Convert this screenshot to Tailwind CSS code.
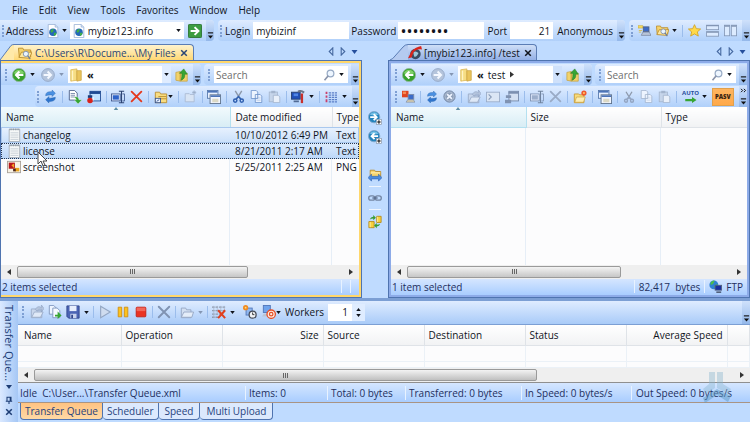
<!DOCTYPE html>
<html lang="en">
  <head>
    <meta charset="UTF-8" />
    <title>mybiz123.info - FTP Client</title>
    <script src="https://cdn.jsdelivr.net/npm/@tailwindcss/browser@4"></script>
  </head>
  <body class="h-screen flex flex-col overflow-hidden bg-[#bfdbff] text-[#10141c] font-['Open_Sans',sans-serif] text-[10px] leading-[14px] whitespace-nowrap">

    <!-- Icon sprite -->
    <svg class="hidden">
      <symbol id="caret" viewBox="0 0 6 4"><path d="M0 0h6L3 4z" fill="currentColor" /></symbol>
      <symbol id="more" viewBox="0 0 8 8"><path d="M1 1h6" stroke="#111" stroke-width="1.3" /><path d="M1 4h6L4 7.5z" fill="#111" /></symbol>
      <symbol id="chevrons" viewBox="0 0 8 6"><path d="M1 1l2 2-2 2M4.500 1l2 2-2 2" fill="none" stroke="#111" stroke-width="1.2" /></symbol>
      <symbol id="page" viewBox="0 0 16 16"><path d="M2.5.5h8l3 3v12h-11z" fill="#fff" stroke="#9fb6d8" /><path d="M10.5.5v3h3" fill="#dce8f8" stroke="#9fb6d8" /><circle cx="8" cy="9.5" r="4.3" fill="#2467b8" /><path d="M5 8q2-3 4-2l-1 3-2 1zM9 10h3q0 3-3 4z" fill="#3fae49" /></symbol>
      <symbol id="go" viewBox="0 0 16 16"><rect x=".5" y=".5" width="15" height="15" rx="1" fill="#3c9c40" stroke="#256f2b" /><path d="M3 8h8M7.5 3.5L12 8l-4.500 4.500" fill="none" stroke="#fff" stroke-width="2.2" /></symbol>
      <symbol id="back" viewBox="0 0 16 16"><circle cx="8" cy="8" r="7.5" fill="#35a02c" stroke="#8fb69a" /><path d="M2 6a6.500 6.500 0 0 1 12 0q-6 3-12 0" fill="#7fd06a" /><path d="M13 8H5M8.500 4L4.500 8l4 4" fill="none" stroke="#fff" stroke-width="2.3" /></symbol>
      <symbol id="fwd" viewBox="0 0 16 16"><circle cx="8" cy="8" r="7.3" fill="#b4c4dc" stroke="#93a7c6" /><path d="M3 8h8M7.500 4l4 4-4 4" fill="none" stroke="#f4f8ff" stroke-width="2.2" /></symbol>
      <symbol id="book" viewBox="0 0 16 16"><path d="M2 2l7-1v13l-7 1z" fill="#f6dd84" stroke="#d6b04a" stroke-width=".8" /><path d="M9 3h5v11l-5 1z" fill="#e9c45c" stroke="#c9a03c" stroke-width=".8" /><path d="M4 3v11" stroke="#fff4c4" stroke-width="1.5" /></symbol>
      <symbol id="up" viewBox="0 0 16 16"><path d="M1 5l5-1v11l-5-1zM6 6h8v9H6z" fill="#f2d26c" stroke="#c69f3a" stroke-width=".8" /><path d="M7 14q5-2 4-7h3L10 1 5 6h3q0 4-1 8z" fill="#37a534" stroke="#207a22" stroke-width=".6" /></symbol>
      <symbol id="lens" viewBox="0 0 16 16"><circle cx="10" cy="6" r="4.5" fill="#eef6ff" stroke="#96a9c4" stroke-width="1.6" /><path d="M7 9l-5 6" stroke="#8a94ab" stroke-width="2.2" /></symbol>
      <symbol id="refresh" viewBox="0 0 16 16"><path d="M2 7Q2 2 8 2h2V0l4 4-4 4V6H8Q5 6 2 7z" fill="#4a90e2" stroke="#2360aa" stroke-width=".5" /><path d="M14 9q0 5-6 5H6v2l-4-4 4-4v2h2q3 0 6-1z" fill="#2f75ce" stroke="#2360aa" stroke-width=".5" /></symbol>
      <symbol id="copyto" viewBox="0 0 16 16"><path d="M1.500.5h6l3 3v8h-9z" fill="#fff" stroke="#465a86" /><path d="M3 4h5M3 6h5M3 8h5" stroke="#7485a8" /><path d="M7 8q5-1 5.500 3H16l-4.500 5L7 11h2.500q0-1-2.500-3z" fill="#37a534" stroke="#fff" stroke-width=".4" /></symbol>
      <symbol id="panel" viewBox="0 0 16 16"><rect x="3.5" y="1.5" width="12" height="11" fill="#bfe0ff" stroke="#1f4a92" /><path d="M3 3h12" stroke="#1f4a92" stroke-width="3" /><path d="M1 6h5v3H1z" fill="#1c3c78" /><circle cx="3.5" cy="12" r="3.2" fill="#d9231c" /><path d="M7 8v4" stroke="#fff" /></symbol>
      <symbol id="rename" viewBox="0 0 16 16"><rect x=".5" y="4.5" width="10" height="8" fill="#e4edff" stroke="#3a548c" /><path d="M2 6h7v5H2z" fill="#2d62c8" /><path d="M9 1.500h6M9 14.500h6M12 1v14" stroke="#2d4474" stroke-width="1.2" /><path d="M13 4.500h2.500v8H13" fill="none" stroke="#3a548c" /></symbol>
      <symbol id="del" viewBox="0 0 16 16"><path d="M2 2l12 12M14 2L2 14" stroke="currentColor" stroke-width="2.2" stroke-linecap="round" /></symbol>
      <symbol id="foldertree" viewBox="0 0 16 16"><path d="M1.500 2.500h5l1 2h7v10h-13z" fill="#f8dd82" stroke="#b98b2c" /><path d="M5 7.500h9M5 10h9" stroke="#b98b2c" /><rect x="1.5" y="9.5" width="6" height="5" fill="#e8f1ff" stroke="#37548c" /><path d="M3 13l3-2" stroke="#37548c" /></symbol>
      <symbol id="foldergray" viewBox="0 0 16 16"><path d="M1.500 3.500h5l1 2h5v9h-11z" fill="#d3e0f2" stroke="#93a5c2" /><path d="M1.500 14l3-6h11l-2 6z" fill="#e4edf9" stroke="#93a5c2" /></symbol>
      <symbol id="newgray" viewBox="0 0 16 16"><path d="M1.500 4.500h5l1 1h5v9h-11z" fill="#d8e4f4" stroke="#a8b8d0" /><path d="M10 3h5M12.500.5v5M11 1.500l3 3M14 1.500l-3 3" stroke="#9aacc8" /></symbol>
      <symbol id="newfolder" viewBox="0 0 16 16"><path d="M1.500 4.500h5l1 1h5v9h-11z" fill="#f8dc7c" stroke="#c79a35" /><path d="M2 14l2-6h10l-2 6z" fill="#fdeeb2" stroke="#c79a35" stroke-width=".7" /><circle cx="12.5" cy="3.5" r="3" fill="#ef5a2b" /><circle cx="12.5" cy="3.5" r="1.2" fill="#ffc36a" /></symbol>
      <symbol id="windows" viewBox="0 0 16 16"><rect x=".5" y=".5" width="12" height="9" fill="#e8f1ff" stroke="#5678ac" /><path d="M1 2h11" stroke="#4c74b8" stroke-width="2" /><rect x="3.5" y="5.5" width="12" height="10" fill="#f2f6ff" stroke="#5d7088" /><path d="M4 7h11" stroke="#4c74b8" stroke-width="2" /><rect x="6" y="10" width="7" height="4" fill="#dcd9c4" /></symbol>
      <symbol id="cut" viewBox="0 0 16 16"><path d="M4 1l6 10M12 1L6 11" stroke="#8c98aa" stroke-width="1.7" /><circle cx="4" cy="13" r="2" fill="none" stroke="currentColor" stroke-width="1.8" /><circle cx="12" cy="13" r="2" fill="none" stroke="currentColor" stroke-width="1.8" /><path d="M5 11l3-3 3 3" fill="none" stroke="currentColor" stroke-width="1.8" /></symbol>
      <symbol id="copy" viewBox="0 0 16 16"><path d="M1.500.5h6l2 2v8h-8zM6.500 5.500h6l2 2v8h-8z" fill="#edf4ff" stroke="currentColor" /><path d="M8 9h5M8 11h5M8 13h5" stroke="currentColor" stroke-opacity=".35" /></symbol>
      <symbol id="paste" viewBox="0 0 16 16"><rect x="1.5" y="2.5" width="10" height="12" fill="#c6d5ea" stroke="#a3b4cd" /><path d="M4 1h5v3H4z" fill="#a3b4cd" /><path d="M6.500 6.500h6l2 2v7h-8z" fill="#e9f0fa" stroke="#a3b4cd" /></symbol>
      <symbol id="tools" viewBox="0 0 16 16"><rect x=".5" y="2.5" width="10" height="8" fill="#1f4fb8" stroke="#27406e" /><path d="M3 4h5v3H3z" fill="#4f85e4" /><path d="M3 13h6" stroke="#506a94" stroke-width="2" /><path d="M8 2q3-2 7 1" stroke="#6c7688" stroke-width="2.4" fill="none" /><path d="M12.500 4v11" stroke="#c8302c" stroke-width="2.6" /></symbol>
      <symbol id="list" viewBox="0 0 16 16"><path d="M2 1v3M2 6v3M2 11v4" stroke="#c8406c" stroke-width="2.4" /><path d="M5 2.500h3M5 5.500h3M5 8.500h3M5 11.500h3M5 14.500h3M9 2.500h3M9 5.500h3M9 8.500h3M9 11.500h3M9 14.500h3M13 2.500h3M13 5.500h3M13 8.500h3M13 11.500h3M13 14.500h3" stroke="#5b7fc8" stroke-width="1.6" /></symbol>
      <symbol id="connect" viewBox="0 0 16 16"><path d="M0 2h6v3H0z" fill="#f6dc63" stroke="#b99c2c" stroke-width=".6" /><rect x="6.5" y="3.5" width="7" height="6" fill="#3c6cc8" stroke="#53617c" /><path d="M4 14l2-4h8l2 4z" fill="#b9c5d8" stroke="#6f7f9b" stroke-width=".8" /><path d="M1 8h4M1 10h3" stroke="#d9b93d" /></symbol>
      <symbol id="folderlens" viewBox="0 0 16 16"><path d="M.5 2.500h5l1 2h8v8h-13z" fill="#f6d36c" stroke="#b98b2c" /><path d="M1 13l3-6h12l-3 7z" fill="#fde79c" stroke="#b98b2c" /><circle cx="9" cy="9" r="3" fill="#e8f4ff" stroke="#7c8ba6" /><path d="M11 11l3 4" stroke="#6c7b96" stroke-width="1.5" /></symbol>
      <symbol id="star" viewBox="0 0 16 16"><path d="M8 .8l2.200 4.900 5.300.5-4 3.500 1.200 5.200L8 12.200l-4.700 2.700 1.200-5.200-4-3.500 5.300-.5z" fill="#ffd94a" stroke="#d0a01f" /></symbol>
      <symbol id="splith" viewBox="0 0 16 16"><rect x=".5" y="1.5" width="15" height="5.5" fill="#dcebff" stroke="#8295b4" /><rect x=".5" y="9.5" width="15" height="5.5" fill="#dcebff" stroke="#8295b4" /><path d="M1 2h14M1 10h14" stroke="#8295b4" stroke-width="1.5" /></symbol>
      <symbol id="splitv" viewBox="0 0 16 16"><rect x=".5" y="1.5" width="6.5" height="13" fill="#dcebff" stroke="#8295b4" /><rect x="9" y="1.5" width="6.5" height="13" fill="#dcebff" stroke="#8295b4" /><path d="M1 2.500h6M9 2.500h6" stroke="#8295b4" stroke-width="2" /></symbol>
      <symbol id="remote" viewBox="0 0 16 16"><circle cx="8.500" cy="9" r="6" fill="#3a4d63" /><path d="M6 7q3-2 6 1-2 5-5 4z" fill="#9ec7d8" /><path d="M0 14L4 6q5-5 11-6l1 4q-7-1-10 4l-2 5z" fill="#d8261c" /></symbol>
      <symbol id="disconnect" viewBox="0 0 16 16"><path d="M0 1h8v8H0z" fill="#e0431f" /><path d="M1 2h4v3H1z" fill="#f58a54" /><rect x="7.5" y="5.5" width="7" height="6" fill="#3c6cc8" stroke="#7c8ba6" /><path d="M5 15l2-3h7l2 3z" fill="#d8cfae" stroke="#7c8ba6" stroke-width=".8" /></symbol>
      <symbol id="stopgray" viewBox="0 0 16 16"><circle cx="8" cy="8" r="7" fill="#8e9fb9" stroke="#7589a8" /><circle cx="8" cy="8" r="5.5" fill="none" stroke="#b5c3d8" /><path d="M5 5l6 6M11 5l-6 6" stroke="#eef4ff" stroke-width="2" /></symbol>
      <symbol id="opengray" viewBox="0 0 16 16"><path d="M1.500 4.500h5l1 2h6v8h-12z" fill="#c9d7ec" stroke="#9aacc8" /><path d="M2 14l3-6h10l-3 6z" fill="#dfe9f7" stroke="#9aacc8" /><path d="M6 5q3-5 7-2V0l3 4-3 4V5q-3-1-5 2z" fill="#b4c4dd" stroke="#8fa2c0" stroke-width=".7" /></symbol>
      <symbol id="cmdgray" viewBox="0 0 16 16"><rect x=".5" y="2.5" width="15" height="11" fill="#dbe6f5" stroke="#9aacc8" /><path d="M3 5l3 3-3 3" fill="none" stroke="#8a9cb9" stroke-width="1.3" /></symbol>
      <symbol id="panelgray" viewBox="0 0 16 16"><rect x="4.5" y="1.5" width="11" height="11" fill="#d4e0f2" stroke="#7488aa" /><path d="M4 3h12" stroke="#7c90b0" stroke-width="2.5" /><path d="M1 6h6v3H1zM0 11h7v4H0z" fill="#8093b2" /></symbol>
      <symbol id="renamegray" viewBox="0 0 16 16"><rect x=".5" y="4.5" width="10" height="8" fill="#e4edff" stroke="#7f92b3" /><path d="M2 6h7v5H2z" fill="#9caecb" /><path d="M9 1.500h6M9 14.500h6M12 1v14" stroke="#71849f" stroke-width="1.2" /><path d="M13 4.500h2.500v8H13" fill="none" stroke="#7f92b3" /></symbol>
      <symbol id="auto" viewBox="0 0 16 8"><path d="M1 2.500h9V0l6 4-6 4V5.500H1z" fill="#37a534" /></symbol>
      <symbol id="addq" viewBox="0 0 16 16"><path d="M1.500.5h5l3 3v7h-8z" fill="#eef5ff" stroke="#7b93bd" /><path d="M5.500 3.500h5l3 3v8h-8z" fill="#f6faff" stroke="#7b93bd" /><path d="M8 11h3V7.500L15.500 12 11 16v-3H8z" fill="#37a534" /></symbol>
      <symbol id="save" viewBox="0 0 16 16"><path d="M1 1h14v14H3l-2-2z" fill="#4b64b4" stroke="#31468c" /><path d="M4 1h8v6H4z" fill="#e8effd" /><path d="M5 10h7v5H5z" fill="#c7d2ec" /><path d="M6 11h2v4H6z" fill="#31468c" /></symbol>
      <symbol id="play" viewBox="0 0 16 16"><path d="M3 1.500L14 8 3 14.500z" fill="#cfdcef" stroke="#94a7c4" stroke-width="1.3" /></symbol>
      <symbol id="pause" viewBox="0 0 16 16"><path d="M2.500 2.500h4v11h-4zM9.500 2.500h4v11h-4z" fill="#fcc21d" stroke="#d08e10" /></symbol>
      <symbol id="stop" viewBox="0 0 16 16"><rect x="2.5" y="2.5" width="11" height="11" rx="1" fill="#ea3323" stroke="#bf1e14" /><path d="M3 3h10v4H3z" fill="#f2675a" /></symbol>
      <symbol id="clearq" viewBox="0 0 16 16"><path d="M0 2.500h16M0 6.500h16M0 10.500h10M0 14h8" stroke="#8e9aae" stroke-width="1.5" stroke-dasharray="3 1" /><path d="M2 1v14M6 1v9M10 1v6M14 1v6" stroke="#a9b3c4" stroke-width=".8" /><path d="M7 6l8 9M15 6l-8 9" stroke="#e0401f" stroke-width="2.3" /></symbol>
      <symbol id="sched" viewBox="0 0 16 16"><rect x="3.5" y="3.5" width="7" height="8" fill="#8fb7f0" stroke="#4f74b8" /><circle cx="3" cy="3" r="3" fill="#f08a24" /><circle cx="3" cy="3" r="1" fill="#ffe27a" /><circle cx="11" cy="11" r="4" fill="#f1f3f6" stroke="#454b57" stroke-width="1.4" /><path d="M11 8.500V11h2" fill="none" stroke="#222" /></symbol>
      <symbol id="workstop" viewBox="0 0 16 16"><rect x="1.5" y=".5" width="8" height="8" fill="#6fa3ec" stroke="#4f74b8" /><path d="M0 13l2-3h7v3z" fill="#b9c5d8" /><circle cx="10.5" cy="10.5" r="4.8" fill="#ffe9df" stroke="#e5512a" stroke-width="1.5" /><circle cx="10.5" cy="10.5" r="2" fill="none" stroke="#e5512a" stroke-width="1.4" /></symbol>
      <symbol id="sendr" viewBox="0 0 16 16"><circle cx="7" cy="7" r="6.5" fill="#2383bd" stroke="#84a9cc" /><path d="M2 4q5-5 10 0-5 2-10 0" fill="#76c1e6" /><path d="M2.500 7h7M6.500 3.500L10 7l-3.500 3.500" fill="none" stroke="#fff" stroke-width="2" /><rect x="9.5" y="9.5" width="6" height="6" fill="#fff" stroke="#8795a8" stroke-width=".8" /><path d="M12.500 10.500v4M10.500 12.500h4" stroke="#111" stroke-width="1.2" /></symbol>
      <symbol id="sendl" viewBox="0 0 16 16"><circle cx="7" cy="7" r="6.5" fill="#2383bd" stroke="#84a9cc" /><path d="M2 4q5-5 10 0-5 2-10 0" fill="#76c1e6" /><path d="M11.500 7h-7M7.500 3.500L4 7l3.500 3.500" fill="none" stroke="#fff" stroke-width="2" /><rect x="9.5" y="9.5" width="6" height="6" fill="#fff" stroke="#8795a8" stroke-width=".8" /><path d="M12.500 10.500v4M10.500 12.500h4" stroke="#111" stroke-width="1.2" /></symbol>
      <symbol id="compare" viewBox="0 0 16 16"><path d="M2.500 2.500h5l1 1.500h6v7h-12z" fill="#f6d36c" stroke="#b98b2c" /><path d="M3 5.500h11" stroke="#fff0ba" /><path d="M0 11l4-4v2.500h8V7l4 4-4 4v-2.500H4V15z" fill="#4a8be0" stroke="#2a5ba8" stroke-width=".6" /></symbol>
      <symbol id="link" viewBox="0 0 16 16"><rect x=".8" y="5.5" width="7" height="5" rx="2.5" fill="none" stroke="#7487a5" stroke-width="1.5" /><rect x="8.2" y="5.5" width="7" height="5" rx="2.5" fill="none" stroke="#7487a5" stroke-width="1.5" /><path d="M5 8h6" stroke="#56698a" stroke-width="1.5" /></symbol>
      <symbol id="sync" viewBox="0 0 16 16"><path d="M10 1.500h5v7h-5zM1 7.500h6v7H1z" fill="#f8cf3c" stroke="#b68a18" /><path d="M11 2v6M2.500 8v6" stroke="#fff0a0" /><path d="M2 5q1-3 4-3V0l3 3-3 3V4Q4 4 2 5zM14 10q-1 3-4 3v2l-3-3 3-3v2q2 0 4-1z" fill="#3a9c32" /></symbol>
      <symbol id="text" viewBox="0 0 16 16"><path d="M2.500 1.500h12v14h-12z" fill="#f6f8f8" stroke="#a5adb5" /><path d="M3 1.500h11" stroke="#8b959e" stroke-width="2" stroke-dasharray="1 1" /><path d="M4 5.500h9M4 8h9M4 10.500h9M4 13h9" stroke="#c3ccd3" /></symbol>
      <symbol id="image" viewBox="0 0 16 16"><rect x=".5" y="1.5" width="15" height="13" fill="#f8f1e4" stroke="#a79f96" /><path d="M2 3h7v7H2z" fill="#b8161a" /><path d="M5 6l3-2v5z" fill="#f5a623" /><path d="M9 9h5v4H9z" fill="#e8a21c" /><path d="M7 10h3v3H7z" fill="#4a2418" /></symbol>
      <symbol id="globe" viewBox="0 0 16 16"><circle cx="6" cy="6" r="5.5" fill="#2f7fd4" /><path d="M2 3q3-3 5-2L5 5 2 6zM6 8l4-3q2 3-1 5z" fill="#4bbd4b" /><rect x="7.5" y="6.5" width="8" height="6" fill="#1b2fa0" stroke="#53617c" /><path d="M9 15h6" stroke="#53617c" stroke-width="2" /></symbol>
      <symbol id="pin" viewBox="0 0 10 10"><path d="M2.500 6.500v-5h5v5M1 6.500h8M5 7v3M6.500 1.500v5" stroke="currentColor" fill="none" stroke-width="1.3" /></symbol>
      <symbol id="close" viewBox="0 0 10 10"><path d="M1.500 1.500l7 7M8.500 1.500l-7 7" stroke="currentColor" stroke-width="1.9" /></symbol>
      <symbol id="prev" viewBox="0 0 8 10"><path d="M6 1v8L2 5z" fill="none" stroke="#44679f" stroke-width="1.2" /></symbol>
      <symbol id="next" viewBox="0 0 8 10"><path d="M2 1v8l4-4z" fill="none" stroke="#44679f" stroke-width="1.2" /></symbol>
      <symbol id="left" viewBox="0 0 4 6"><path d="M4 0v6L0 3z" fill="#333" /></symbol>
      <symbol id="right" viewBox="0 0 4 6"><path d="M0 0v6l4-3z" fill="#333" /></symbol>
    </svg>

    <!-- Menu bar -->
    <nav class="flex items-center h-5 pl-3 gap-[11px]">
      <a href="#">File</a>
      <a href="#">Edit</a>
      <a href="#">View</a>
      <a href="#">Tools</a>
      <a href="#">Favorites</a>
      <a href="#">Window</a>
      <a href="#">Help</a>
    </nav>

    <!-- Connection bar -->
    <div class="flex gap-1 h-[21px]">
      <div class="flex items-center w-[214px] rounded-r bg-linear-to-b from-[#dfecff] to-[#b0d0fa]">
        <span class="ml-[2px] mr-[2px] h-3 border-l-2 border-dotted border-[#7e9fd3]"></span>
        <label for="address">Address</label>
        <button aria-label="Site type" class="flex items-center gap-[2px] ml-[2px] mr-[3px]"><svg class="size-[14px]"><use href="#page" /></svg><svg class="w-[5px] h-[3px]"><use href="#caret" /></svg></button>
        <div class="flex items-center flex-1 min-w-0 h-[17px] bg-white pl-[2px] mr-1">
          <svg class="size-[14px] shrink-0"><use href="#page" /></svg>
          <input id="address" type="text" value="mybiz123.info" class="flex-1 min-w-0 pl-[2px] outline-none" />
          <button aria-label="Address history" class="px-[3px]"><svg class="w-[5px] h-[3px]"><use href="#caret" /></svg></button>
        </div>
        <button aria-label="Connect"><svg class="size-[14px]"><use href="#go" /></svg></button>
        <button aria-label="More" class="flex items-end justify-center w-2 h-full ml-1 pb-[2px] rounded-r bg-linear-to-b from-[#cfe1fb] to-[#94b8ea]"><svg class="size-[7px]"><use href="#more" /></svg></button>
      </div>
      <div class="flex items-center flex-1 max-w-[407px] rounded bg-linear-to-b from-[#dfecff] to-[#b0d0fa]">
        <span class="ml-[2px] mr-[3px] h-3 border-l-2 border-dotted border-[#7e9fd3]"></span>
        <label for="login">Login</label>
        <input id="login" type="text" value="mybizinf" class="w-24 h-[17px] bg-white ml-[3px] mr-[2px] px-[3px] outline-none" />
        <label for="password">Password</label>
        <input id="password" type="password" value="password" class="w-[86px] h-[17px] bg-white ml-[2px] mr-[3px] px-[2px] text-[16px] outline-none" />
        <label for="port">Port</label>
        <input id="port" type="text" value="21" class="flex-1 min-w-0 h-[17px] bg-white ml-[3px] mr-1 px-[3px] text-right outline-none" />
        <button>Anonymous</button>
        <button aria-label="More" class="flex items-end justify-center w-2 h-full ml-1 pb-[2px] rounded-r bg-linear-to-b from-[#cfe1fb] to-[#94b8ea]"><svg class="size-[7px]"><use href="#more" /></svg></button>
      </div>
      <div class="flex items-center gap-[5px] w-[122px] rounded-l bg-linear-to-b from-[#dfecff] to-[#b0d0fa]">
        <span class="ml-[2px] h-3 border-l-2 border-dotted border-[#7e9fd3]"></span>
        <button aria-label="Quick connect"><svg class="size-[13px]"><use href="#connect" /></svg></button>
        <button aria-label="Site manager" class="flex items-center gap-[3px]"><svg class="size-[13px]"><use href="#folderlens" /></svg><svg class="w-[5px] h-[3px]"><use href="#caret" /></svg></button>
        <span class="w-px h-3 bg-[#9bbdec]"></span>
        <button aria-label="Favorites"><svg class="size-[13px]"><use href="#star" /></svg></button>
        <button aria-label="Split horizontally"><svg class="size-[13px]"><use href="#splith" /></svg></button>
        <button aria-label="Split vertically"><svg class="size-[13px]"><use href="#splitv" /></svg></button>
        <button aria-label="More" class="flex items-end justify-center w-2 h-full ml-auto pb-[2px] bg-linear-to-b from-[#cfe1fb] to-[#94b8ea]"><svg class="size-[7px]"><use href="#more" /></svg></button>
      </div>
    </div>

    <!-- Panes -->
    <main class="grid grid-cols-[1fr_26px_1fr] flex-1 min-h-0 pt-[3px]">

      <!-- Local pane -->
      <section class="flex flex-col min-w-0 min-h-0">
        <div class="flex items-end h-4">
          <svg class="w-[14px] h-4 shrink-0" viewBox="0 0 14 16"><path d="M0 16L11 1.500Q12 .5 14 .5V16z" fill="#ffe9a8" /><path d="M0 16L11 1.500Q12 .5 14 .5" fill="none" stroke="#5b7db5" /></svg>
          <div class="flex items-center gap-[3px] h-4 pl-1 pr-[5px] border-t border-r border-[#5b7db5] rounded-tr-sm bg-linear-to-b from-[#fff3cd] to-[#ffd873] text-[#2b4675]">
            <svg class="size-[14px]"><use href="#folderlens" /></svg>
            <span>C:\Users\R\Docume...\My Files</span>
            <button aria-label="Close tab" class="ml-[2px]"><svg class="size-2"><use href="#close" /></svg></button>
          </div>
          <div class="flex items-center gap-1 ml-auto mr-1 mb-1 text-[#264f9c]">
            <button aria-label="Previous tab"><svg class="w-2 h-[9px]"><use href="#prev" /></svg></button>
            <button aria-label="Next tab"><svg class="w-2 h-[9px]"><use href="#next" /></svg></button>
            <button aria-label="Tab list"><svg class="w-[7px] h-1"><use href="#caret" /></svg></button>
          </div>
        </div>
        <div class="flex flex-col flex-1 min-h-0 border border-[#4f74b0]">
          <div class="flex flex-col flex-1 min-h-0 border-t-2 border-r-2 border-b-2 border-[#ffd76b] bg-[#bfdbff]">
            <div class="flex gap-[3px] h-[21px] mt-px">
              <div class="flex items-center w-[200px] rounded-r bg-linear-to-b from-[#dfecff] to-[#b0d0fa]">
                <span class="ml-1 mr-[5px] h-3 border-l-2 border-dotted border-[#7e9fd3]"></span>
                <button aria-label="Back" class="flex items-center gap-1 mr-[6px]"><svg class="size-[14px]"><use href="#back" /></svg><svg class="w-[5px] h-[3px]"><use href="#caret" /></svg></button>
                <button aria-label="Forward" class="flex items-center gap-1 mr-1 text-[#8496b3]"><svg class="size-[14px]"><use href="#fwd" /></svg><svg class="w-[5px] h-[3px]"><use href="#caret" /></svg></button>
                <div class="flex items-center flex-1 h-[17px] bg-white pl-px mr-1">
                  <svg class="size-[14px]"><use href="#book" /></svg>
                  <button class="ml-1 font-bold text-[11px]">«</button>
                  <button aria-label="Path history" class="flex items-center h-full px-[2px] ml-auto bg-[#dfecff]"><svg class="w-[5px] h-[3px]"><use href="#caret" /></svg></button>
                </div>
                <button aria-label="Up"><svg class="size-[14px]"><use href="#up" /></svg></button>
                <button aria-label="More" class="flex items-end justify-center w-2 h-full ml-1 pb-[2px] rounded-r bg-linear-to-b from-[#cfe1fb] to-[#94b8ea]"><svg class="size-[7px]"><use href="#more" /></svg></button>
              </div>
              <div class="flex items-center flex-1 min-w-0 rounded-l bg-linear-to-b from-[#dfecff] to-[#b0d0fa]">
                <span class="ml-1 mr-1 h-3 border-l-2 border-dotted border-[#7e9fd3]"></span>
                <div class="flex items-center flex-1 min-w-0 h-[17px] bg-white pr-1">
                  <input type="search" aria-label="Search local files" placeholder="Search" class="flex-1 min-w-0 pl-[2px] outline-none placeholder:text-[#6d6d6d]" />
                  <button aria-label="Search options" class="flex items-center gap-1"><svg class="size-3"><use href="#lens" /></svg><svg class="w-[5px] h-[3px]"><use href="#caret" /></svg></button>
                </div>
                <button aria-label="More" class="flex items-end justify-center w-2 h-full ml-[3px] pb-[2px] bg-linear-to-b from-[#cfe1fb] to-[#94b8ea]"><svg class="size-[7px]"><use href="#more" /></svg></button>
              </div>
            </div>
            <div class="flex items-center gap-[5px] h-[21px] mt-px ml-[34px] rounded-l bg-linear-to-b from-[#dfecff] to-[#b0d0fa]">
              <span class="ml-[2px] h-3 border-l-2 border-dotted border-[#7e9fd3]"></span>
              <button aria-label="Refresh"><svg class="size-[13px]"><use href="#refresh" /></svg></button>
              <span class="w-px h-3 bg-[#9bbdec]"></span>
              <button aria-label="Copy to"><svg class="size-[14px]"><use href="#copyto" /></svg></button>
              <button aria-label="Panel"><svg class="size-[14px]"><use href="#panel" /></svg></button>
              <span class="w-px h-3 bg-[#9bbdec]"></span>
              <button aria-label="Rename"><svg class="size-[14px]"><use href="#rename" /></svg></button>
              <button aria-label="Delete" class="text-[#e5371c]"><svg class="size-[13px]"><use href="#del" /></svg></button>
              <span class="w-px h-3 bg-[#9bbdec]"></span>
              <button aria-label="Folder tree" class="flex items-center"><svg class="size-[14px]"><use href="#foldertree" /></svg><svg class="w-[5px] h-[3px]"><use href="#caret" /></svg></button>
              <span class="w-px h-3 bg-[#9bbdec]"></span>
              <button aria-label="New folder" disabled><svg class="size-[13px]"><use href="#newgray" /></svg></button>
              <span class="w-px h-3 bg-[#9bbdec]"></span>
              <button aria-label="Windows"><svg class="size-[14px]"><use href="#windows" /></svg></button>
              <span class="w-px h-3 bg-[#9bbdec]"></span>
              <button aria-label="Cut" class="text-[#2f5fb0]"><svg class="size-[13px]"><use href="#cut" /></svg></button>
              <button aria-label="Copy" class="text-[#6a8fc8]"><svg class="size-[13px]"><use href="#copy" /></svg></button>
              <button aria-label="Paste" disabled><svg class="size-[13px]"><use href="#paste" /></svg></button>
              <span class="w-px h-3 bg-[#9bbdec]"></span>
              <button aria-label="Tools" class="flex items-center gap-1"><svg class="size-[14px]"><use href="#tools" /></svg><svg class="w-[5px] h-[3px]"><use href="#caret" /></svg></button>
              <span class="w-px h-3 bg-[#9bbdec]"></span>
              <button aria-label="View" class="flex items-center gap-[5px]"><svg class="size-3"><use href="#list" /></svg><svg class="w-[5px] h-[3px]"><use href="#caret" /></svg></button>
              <button aria-label="More" class="flex items-end justify-center w-2 h-full ml-auto pb-[2px] bg-linear-to-b from-[#cfe1fb] to-[#94b8ea]"><svg class="size-[7px]"><use href="#more" /></svg></button>
            </div>
            <div class="relative flex flex-1 min-h-0 bg-[#fcfcfd]">
              <div class="flex-none w-[229px] border-r border-[#e6eef7]"></div>
              <div class="flex-none w-[102px] border-r border-[#e6eef7]"></div>
              <table class="absolute inset-x-0 top-0 w-full table-fixed">
                <thead>
                  <tr class="h-5">
                    <th class="w-[229px] pl-[5px] text-left font-normal border-r border-b border-[#b4e0f0] bg-linear-to-b from-[#f2fafd] to-[#d8edf5]">Name<svg class="absolute top-0 left-28 w-[6px] h-[3px] rotate-180 text-[#5f8fa8]"><use href="#caret" /></svg></th>
                    <th class="w-[102px] pl-[5px] text-left font-normal border-r border-b border-[#dfe3e8] bg-linear-to-b from-white to-[#f1f2f4]">Date modified</th>
                    <th class="pl-1 text-left font-normal border-b border-[#dfe3e8] bg-linear-to-b from-white to-[#f1f2f4]">Type</th>
                  </tr>
                </thead>
                <tbody>
                  <tr class="h-4 bg-linear-to-b from-[#e9f2fe] to-[#c8dffa] outline outline-[#a9c8ee] -outline-offset-1">
                    <td class="pl-[6px]"><div class="flex items-center gap-[2px]"><svg class="size-[14px]"><use href="#text" /></svg>changelog</div></td>
                    <td class="pl-[5px]">10/10/2012 6:49 PM</td>
                    <td class="pl-1 overflow-hidden">Text</td>
                  </tr>
                  <tr class="h-4 bg-linear-to-b from-[#dcebfd] to-[#bad6f8] outline-1 outline-dotted outline-[#27374f] -outline-offset-1">
                    <td class="pl-[6px]"><div class="flex items-center gap-[2px]"><svg class="size-[14px]"><use href="#text" /></svg>license</div></td>
                    <td class="pl-[5px]">8/21/2011 2:17 AM</td>
                    <td class="pl-1 overflow-hidden">Text</td>
                  </tr>
                  <tr class="h-4">
                    <td class="pl-[6px]"><div class="flex items-center gap-[2px]"><svg class="size-[14px]"><use href="#image" /></svg>screenshot</div></td>
                    <td class="pl-[5px]">5/25/2011 2:25 AM</td>
                    <td class="pl-1 overflow-hidden">PNG</td>
                  </tr>
                </tbody>
              </table>
              <svg class="absolute left-9 top-[44px] w-[11px] h-4" viewBox="0 0 11 16"><path d="M1 1v12l3-3 2 5 2-1-2-4h4z" fill="#fff" stroke="#444" /></svg>
            </div>
            <div class="flex items-center h-[14px] bg-[#efefef]">
              <button aria-label="Scroll left" class="w-4 flex justify-center"><svg class="w-1 h-[6px]"><use href="#left" /></svg></button>
              <div class="flex items-center justify-center w-[231px] h-3 border border-[#9a9a9a] rounded-xs bg-linear-to-b from-[#f3f3f3] to-[#c6c6c6]"><span class="w-[5px] h-[5px] border-x border-[#666] flex justify-center"><i class="w-px bg-[#666]"></i></span></div>
              <button aria-label="Scroll right" class="w-4 ml-auto flex justify-center"><svg class="w-1 h-[6px]"><use href="#right" /></svg></button>
            </div>
            <div class="flex items-center h-4 pl-px text-[#1e2f5e] bg-linear-to-b from-[#d5e6ff] via-[#bfdaff] to-[#a9cdff]">
              <span>2 items selected</span>
              <span class="w-px h-[13px] ml-auto bg-[#e8f2ff]"></span>
              <span class="w-px h-[13px] ml-2 mr-2 bg-[#e8f2ff]"></span>
            </div>
          </div>
        </div>
      </section>

      <!-- Transfer buttons -->
      <div class="flex flex-col items-center pt-[67px]">
        <button aria-label="Upload"><svg class="size-[14px]"><use href="#sendr" /></svg></button>
        <button aria-label="Download" class="mt-[5px]"><svg class="size-[14px]"><use href="#sendl" /></svg></button>
        <button aria-label="Compare folders" class="mt-6"><svg class="size-[14px]"><use href="#compare" /></svg></button>
        <span class="w-3 h-px mt-1 bg-[#eef5ff]"></span>
        <button aria-label="Link folders" class="mt-1"><svg class="size-[14px]"><use href="#link" /></svg></button>
        <span class="w-3 h-px mt-1 bg-[#eef5ff]"></span>
        <button aria-label="Synchronize" class="mt-[5px]"><svg class="size-[14px]"><use href="#sync" /></svg></button>
      </div>

      <!-- Remote pane -->
      <section class="flex flex-col min-w-0 min-h-0">
        <div class="flex items-end h-4">
          <svg class="w-5 h-4 shrink-0" viewBox="0 0 20 16"><path d="M2 16q3-1 5-4l8-9Q17 .5 20 .5V16z" fill="#b5cbf0" /><path d="M2 16q3-1 5-4l8-9Q17 .5 20 .5" fill="none" stroke="#5b7db5" /></svg>
          <div class="flex items-center gap-[2px] h-4 pr-1 border-t border-r border-[#5b7db5] rounded-tr-sm bg-linear-to-b from-[#cfdff7] to-[#93b0e6]">
            <svg class="size-[14px]"><use href="#remote" /></svg>
            <span>[mybiz123.info] /test</span>
            <button aria-label="Close tab" class="ml-[2px]"><svg class="size-2"><use href="#close" /></svg></button>
          </div>
          <div class="flex items-center gap-1 ml-auto mr-1 mb-1 text-[#264f9c]">
            <button aria-label="Previous tab"><svg class="w-2 h-[9px]"><use href="#prev" /></svg></button>
            <button aria-label="Next tab"><svg class="w-2 h-[9px]"><use href="#next" /></svg></button>
            <button aria-label="Tab list"><svg class="w-[7px] h-1"><use href="#caret" /></svg></button>
          </div>
        </div>
        <div class="flex flex-col flex-1 min-h-0 border border-[#4f74b0]">
          <div class="flex flex-col flex-1 min-h-0 border-2 border-[#8dabe8] bg-[#bfdbff]">
            <div class="flex gap-[3px] h-[21px] mt-px">
              <div class="flex items-center flex-1 min-w-0 rounded-r bg-linear-to-b from-[#dfecff] to-[#b0d0fa]">
                <span class="ml-1 mr-[5px] h-3 border-l-2 border-dotted border-[#7e9fd3]"></span>
                <button aria-label="Back" class="flex items-center gap-1 mr-[6px]"><svg class="size-[14px]"><use href="#back" /></svg><svg class="w-[5px] h-[3px]"><use href="#caret" /></svg></button>
                <button aria-label="Forward" class="flex items-center gap-1 mr-1 text-[#8496b3]"><svg class="size-[14px]"><use href="#fwd" /></svg><svg class="w-[5px] h-[3px]"><use href="#caret" /></svg></button>
                <div class="flex items-center flex-1 h-[17px] bg-white pl-px mr-1">
                  <svg class="size-[14px]"><use href="#book" /></svg>
                  <button class="ml-1 font-bold text-[11px]">«</button>
                  <button class="flex items-center gap-[5px] ml-1">test<svg class="w-1 h-[7px]"><use href="#right" /></svg></button>
                  <button aria-label="Path history" class="flex items-center h-full px-[2px] ml-auto bg-[#cfe1fb]"><svg class="w-[5px] h-[3px]"><use href="#caret" /></svg></button>
                </div>
                <button aria-label="Up"><svg class="size-[14px]"><use href="#up" /></svg></button>
                <button aria-label="More" class="flex items-end justify-center w-2 h-full ml-1 pb-[2px] rounded-r bg-linear-to-b from-[#cfe1fb] to-[#94b8ea]"><svg class="size-[7px]"><use href="#more" /></svg></button>
              </div>
              <div class="flex items-center w-[152px] rounded-l bg-linear-to-b from-[#dfecff] to-[#b0d0fa]">
                <span class="ml-1 mr-1 h-3 border-l-2 border-dotted border-[#7e9fd3]"></span>
                <div class="flex items-center flex-1 min-w-0 h-[17px] bg-white pr-1">
                  <input type="search" aria-label="Search remote files" placeholder="Search" class="flex-1 min-w-0 pl-[2px] outline-none placeholder:text-[#6d6d6d]" />
                  <button aria-label="Search options" class="flex items-center gap-1"><svg class="size-3"><use href="#lens" /></svg><svg class="w-[5px] h-[3px]"><use href="#caret" /></svg></button>
                </div>
                <button aria-label="More" class="flex items-end justify-center w-2 h-full ml-[3px] pb-[2px] bg-linear-to-b from-[#cfe1fb] to-[#94b8ea]"><svg class="size-[7px]"><use href="#more" /></svg></button>
              </div>
            </div>
            <div class="flex items-center gap-[5px] h-[21px] mt-px bg-linear-to-b from-[#dfecff] to-[#b0d0fa]">
              <span class="ml-1 h-3 border-l-2 border-dotted border-[#7e9fd3]"></span>
              <button aria-label="Disconnect"><svg class="size-[13px]"><use href="#disconnect" /></svg></button>
              <span class="w-px h-3 bg-[#9bbdec]"></span>
              <button aria-label="Refresh"><svg class="size-3"><use href="#refresh" /></svg></button>
              <button aria-label="Stop" disabled><svg class="size-[13px]"><use href="#stopgray" /></svg></button>
              <span class="w-px h-3 bg-[#9bbdec]"></span>
              <button aria-label="Open" disabled><svg class="size-[14px]"><use href="#opengray" /></svg></button>
              <button aria-label="Command" disabled><svg class="size-[14px]"><use href="#cmdgray" /></svg></button>
              <button aria-label="Panel" disabled><svg class="size-[14px]"><use href="#panelgray" /></svg></button>
              <span class="w-px h-3 bg-[#9bbdec]"></span>
              <button aria-label="Rename" disabled><svg class="size-[14px]"><use href="#renamegray" /></svg></button>
              <button aria-label="Delete" disabled class="text-[#9aabc6]"><svg class="size-[13px]"><use href="#del" /></svg></button>
              <span class="w-px h-3 bg-[#9bbdec]"></span>
              <button aria-label="New folder"><svg class="size-[14px]"><use href="#newfolder" /></svg></button>
              <span class="w-px h-3 bg-[#9bbdec]"></span>
              <button aria-label="Windows"><svg class="size-[14px]"><use href="#windows" /></svg></button>
              <span class="w-px h-3 bg-[#9bbdec]"></span>
              <button aria-label="Cut" disabled class="text-[#93a5c2]"><svg class="size-3"><use href="#cut" /></svg></button>
              <button aria-label="Copy" disabled class="text-[#a3b4cd]"><svg class="size-[13px]"><use href="#copy" /></svg></button>
              <button aria-label="Paste" disabled><svg class="size-[13px]"><use href="#paste" /></svg></button>
              <span class="w-px h-3 bg-[#9bbdec]"></span>
              <button class="flex items-center gap-[3px]"><span class="flex flex-col items-center text-[6px] leading-[7px] font-bold text-[#274f9c]">AUTO<svg class="w-[13px] h-[6px]"><use href="#auto" /></svg></span><svg class="w-[5px] h-[3px]"><use href="#caret" /></svg></button>
              <button class="h-[18px] px-[2px] border border-[#e0a04c] bg-linear-to-b from-[#fdb45f] to-[#ffa94a] text-[6px] leading-none font-extrabold text-[#3a2412]">PASV</button>
              <button aria-label="More" class="flex flex-col items-center justify-between w-2 h-full ml-auto pt-[2px] pb-[2px] bg-linear-to-b from-[#cfe1fb] to-[#94b8ea]"><svg class="w-[7px] h-[5px]"><use href="#chevrons" /></svg><svg class="size-[7px]"><use href="#more" /></svg></button>
            </div>
            <div class="relative flex flex-1 min-h-0 bg-[#fcfcfd]">
              <div class="flex-none w-[135px] border-r border-[#e6eef7]"></div>
              <div class="flex-none w-[135px] border-r border-[#e6eef7]"></div>
              <table class="absolute inset-x-0 top-0 w-full table-fixed">
                <thead>
                  <tr class="h-5">
                    <th class="w-[135px] pl-[5px] text-left font-normal border-r border-b border-[#b4e0f0] bg-linear-to-b from-[#f2fafd] to-[#d8edf5]">Name<svg class="absolute top-0 left-16 w-[6px] h-[3px] rotate-180 text-[#5f8fa8]"><use href="#caret" /></svg></th>
                    <th class="w-[135px] pl-1 text-left font-normal border-r border-b border-[#dfe3e8] bg-linear-to-b from-white to-[#f1f2f4]">Size</th>
                    <th class="pl-1 text-left font-normal border-b border-[#dfe3e8] bg-linear-to-b from-white to-[#f1f2f4]">Type</th>
                  </tr>
                </thead>
              </table>
            </div>
            <div class="flex items-center h-[14px] bg-[#efefef]">
              <button aria-label="Scroll left" class="w-4 flex justify-center"><svg class="w-1 h-[6px]"><use href="#left" /></svg></button>
              <div class="flex items-center justify-center w-[214px] h-3 border border-[#9a9a9a] rounded-xs bg-linear-to-b from-[#f3f3f3] to-[#c6c6c6]"><span class="w-[5px] h-[5px] border-x border-[#666] flex justify-center"><i class="w-px bg-[#666]"></i></span></div>
              <button aria-label="Scroll right" class="w-4 ml-auto flex justify-center"><svg class="w-1 h-[6px]"><use href="#right" /></svg></button>
            </div>
            <div class="flex items-center h-4 pl-px pr-1 text-[#1e2f5e] bg-linear-to-b from-[#d5e6ff] via-[#bfdaff] to-[#a9cdff]">
              <span>1 item selected</span>
              <span class="w-px h-[13px] ml-auto bg-[#e8f2ff]"></span>
              <span class="ml-1 whitespace-pre">82,417  bytes</span>
              <span class="w-px h-[13px] mx-1 bg-[#e8f2ff]"></span>
              <svg class="size-[13px] mr-1"><use href="#globe" /></svg>
              <span>FTP</span>
            </div>
          </div>
        </div>
      </section>
    </main>

    <!-- Transfer queue -->
    <div class="h-[3px] bg-[#7c9fd4]"></div>
    <section class="relative flex">
      <aside class="flex flex-col items-center w-[18px] gap-1 pt-1 text-[#1c3c74] bg-linear-to-r from-[#dbe9ff] to-[#a5c7f5]">
        <h2 class="[writing-mode:vertical-rl] text-[11px]">Transfer Que...</h2>
        <button aria-label="Panel menu" class="mt-auto mb-[3px]"><svg class="w-[6px] h-1"><use href="#caret" /></svg></button>
        <button aria-label="Pin panel"><svg class="size-2"><use href="#pin" /></svg></button>
        <button aria-label="Close panel" class="mb-[6px]"><svg class="size-2"><use href="#close" /></svg></button>
      </aside>
      <div class="flex flex-col flex-1 min-w-0 pb-px">
        <div class="flex items-center h-6 bg-linear-to-b from-[#dfecff] to-[#a9cbf8] border-b border-[#7c9fd4]">
          <div class="flex items-center gap-1 flex-1">
            <span class="ml-1 mr-[2px] h-3 border-l-2 border-dotted border-[#7e9fd3]"></span>
            <button aria-label="Open queue" disabled><svg class="size-[14px]"><use href="#opengray" /></svg></button>
            <button aria-label="Add to queue"><svg class="size-[14px]"><use href="#addq" /></svg></button>
            <button aria-label="Save queue" class="flex items-center gap-1"><svg class="size-[14px]"><use href="#save" /></svg><svg class="w-[5px] h-[3px]"><use href="#caret" /></svg></button>
            <span class="w-px h-3 bg-[#9bbdec]"></span>
            <button aria-label="Start" disabled><svg class="size-[14px]"><use href="#play" /></svg></button>
            <button aria-label="Pause"><svg class="size-[14px]"><use href="#pause" /></svg></button>
            <button aria-label="Stop"><svg class="size-[14px]"><use href="#stop" /></svg></button>
            <span class="w-px h-3 bg-[#9bbdec]"></span>
            <button aria-label="Remove" disabled class="text-[#8093b2]"><svg class="size-[14px]"><use href="#del" /></svg></button>
            <span class="w-px h-3 bg-[#9bbdec]"></span>
            <button aria-label="Open folder" class="flex items-center gap-1 text-[#8496b3]"><svg class="size-[14px]"><use href="#foldergray" /></svg><svg class="w-[5px] h-[3px]"><use href="#caret" /></svg></button>
            <span class="w-px h-3 bg-[#9bbdec]"></span>
            <button aria-label="Clear queue" class="flex items-center gap-1"><svg class="size-[14px]"><use href="#clearq" /></svg><svg class="w-[5px] h-[3px]"><use href="#caret" /></svg></button>
            <button aria-label="Schedule" class="ml-1"><svg class="size-[14px]"><use href="#sched" /></svg></button>
            <button aria-label="Stop workers" class="flex items-center ml-px"><svg class="size-[14px]"><use href="#workstop" /></svg><svg class="w-[5px] h-[3px]"><use href="#caret" /></svg></button>
            <label for="workers">Workers</label>
            <div class="flex h-[17px]">
              <input id="workers" type="text" value="1" class="w-6 px-1 bg-white text-right outline-none" />
              <div class="flex flex-col items-center justify-center gap-[3px] w-[13px] bg-[#dfecff]">
                <button aria-label="More workers"><svg class="w-[5px] h-[3px] rotate-180"><use href="#caret" /></svg></button>
                <button aria-label="Fewer workers"><svg class="w-[5px] h-[3px]"><use href="#caret" /></svg></button>
              </div>
            </div>
          </div>
          <button aria-label="More" class="flex items-end justify-center w-2 h-full pb-[2px] bg-linear-to-b from-[#cfe1fb] to-[#94b8ea]"><svg class="size-[7px]"><use href="#more" /></svg></button>
        </div>
        <table class="w-full table-fixed bg-[#fcfcfd]">
          <thead>
            <tr class="h-[21px] bg-linear-to-b from-white to-[#f1f2f4] [&>th]:font-normal [&>th]:text-left [&>th]:border-r [&>th]:border-b [&>th]:border-[#dfe3e8]">
              <th class="w-[103px] pl-[6px]">Name</th>
              <th class="w-[101px] pl-1">Operation</th>
              <th class="w-[101px] pr-1"><div class="text-right">Size</div></th>
              <th class="w-[101px] pl-1">Source</th>
              <th class="w-[101px] pl-1">Destination</th>
              <th class="w-[101px] pl-1">Status</th>
              <th class="w-[101px] pr-1"><div class="text-right">Average Speed</div></th>
              <th></th>
            </tr>
          </thead>
          <tbody class="[&_td]:border-r [&_td]:border-b [&_td]:border-[#ebf1f7]">
            <tr class="h-4"><td></td><td></td><td></td><td></td><td></td><td></td><td></td><td></td></tr>
            <tr class="h-[6px]"><td></td><td></td><td></td><td></td><td></td><td></td><td></td><td></td></tr>
          </tbody>
        </table>
        <div class="flex items-center h-[15px] bg-[#efefef] border-b border-[#8f8f8f]">
          <button aria-label="Scroll left" class="w-4 flex justify-center"><svg class="w-1 h-[6px]"><use href="#left" /></svg></button>
          <div class="flex items-center justify-center w-[503px] h-3 border border-[#9a9a9a] rounded-xs bg-linear-to-b from-[#f3f3f3] to-[#c0c0c0]"><span class="w-[5px] h-[5px] border-x border-[#666] flex justify-center"><i class="w-px bg-[#666]"></i></span></div>
          <button aria-label="Scroll right" class="w-4 ml-auto flex justify-center"><svg class="w-1 h-[6px]"><use href="#right" /></svg></button>
        </div>
        <div class="flex items-center h-5 text-[#1e2f5e] bg-linear-to-b from-[#d5e6ff] via-[#bfdaff] to-[#a9cdff] border-b border-[#a99484]">
          <span class="w-[227px] pl-[2px] whitespace-pre">Idle  C:\User...\Transfer Queue.xml</span>
          <span class="w-[82px] pl-[3px] border-l border-[#e8f2ff]">Items: 0</span>
          <span class="w-[78px] pl-[3px] border-l border-[#e8f2ff]">Total: 0 bytes</span>
          <span class="w-[116px] pl-[3px] border-l border-[#e8f2ff]">Transferred: 0 bytes</span>
          <span class="w-[110px] pl-[3px] border-l border-[#e8f2ff]">In Speed: 0 bytes/s</span>
          <span class="flex-1 pl-1 border-l border-[#e8f2ff]">Out Speed: 0 bytes/s</span>
        </div>
        <div class="flex h-[17px] text-[#27437c]">
          <button class="px-1 ml-[2px] border-x border-b border-[#4f74b0] rounded-b-sm bg-linear-to-b from-[#ffc382] to-[#ffd9a5]">Transfer Queue</button>
          <button class="px-1 border-r border-b border-[#4f74b0] rounded-b-sm bg-[#dce9fd]">Scheduler</button>
          <button class="px-[6px] border-r border-b border-[#4f74b0] rounded-b-sm bg-[#dce9fd]">Speed</button>
          <button class="px-[6px] border-r border-b border-[#4f74b0] rounded-b-sm bg-[#dce9fd]">Multi Upload</button>
        </div>
      </div>
      <!-- Watermark -->
      <svg class="absolute right-[17px] bottom-[18px] w-8 h-8" viewBox="0 0 32 32"><path d="M8 0h6v16l-9 6-3-5 6-5zM16 0h6v12l8 5-3 5-11-6z" fill="#86b5cc" fill-opacity=".4" /><path d="M2 26l14-9 14 7-3 6-11-7-12 8z" fill="#5f9bc4" fill-opacity=".5" /></svg>
    </section>
  </body>
</html>
